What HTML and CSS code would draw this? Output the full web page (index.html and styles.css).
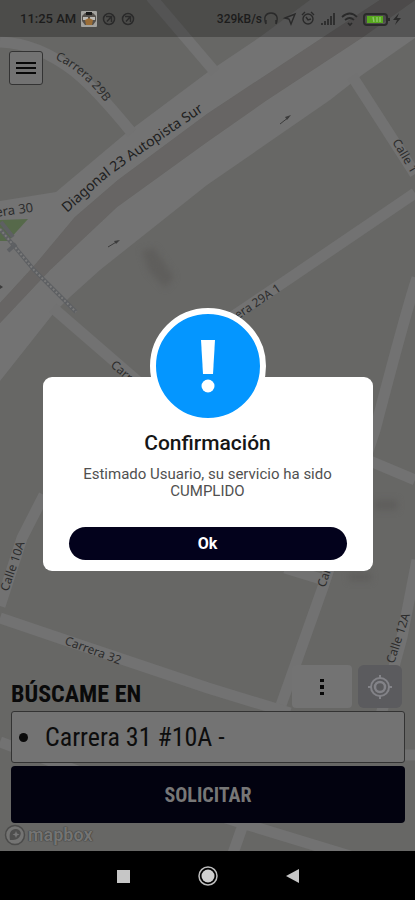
FILE: index.html
```html
<!DOCTYPE html>
<html lang="es">
<head>
<meta charset="utf-8">
<meta name="viewport" content="width=device-width, initial-scale=1">
<title>Confirmación</title>
<link rel="stylesheet" href="styles.css">
</head>
<body>
<div class="screen">
  <svg class="map" viewBox="0 0 415 900" preserveAspectRatio="xMidYMid slice" aria-hidden="true">
    <defs>
      <path id="p29b" d="M55 59Q86 73 112 112"/>
      <path id="pdiag" d="M67 213L104 180Q124 164 210 107"/>
      <path id="p32" d="M64 644L134 670"/>
      <path id="p30" d="M-4 217L46 210"/>
    </defs>
    <g class="road">
      <path class="fill" d="M0 201L56 192L125 134L208 72L260 37L310 0H380L322 38L207 114L118 180L75 217L34 266L0 303Z"/>
      <path class="fill" d="M0 323L50 270L117 207L207 142L267 100L363 37L415 0V38L362 75L330 100L207 185L100 270L70 297L53 314L0 381Z"/>
      <path d="M0 42Q38 43 75 72Q97 90 132 133"/>
      <path d="M151 -3L215 72"/>
      <path d="M352 76L372 107L415 174"/>
      <path d="M415 193L290 278L190 345"/>
      <path d="M417 278Q406 311 375 430L323 587L280 708"/>
      <path d="M370 461L415 480M285 568L321 579"/>
      <path d="M0 618L65 640L208 688L290 713"/>
      <path d="M0 606Q10 575 22 538L44 495"/>
      <path d="M417 560L402 637L385 700L370 755H415"/>
      <path d="M53 308L150 392"/>
      <path d="M0 742L80 772L245 824L350 856M232 856L244 822"/>
    </g>
    <path class="median" d="M322 38L207 114L118 180L75 217L34 266L0 303V323L50 270L117 207L207 142L267 100L363 37L415 0H380Z"/>
    <path class="park" d="M0 220L28 219L8 241H0Z"/>
    <path class="rail" d="M0 229L34 270L76 312"/>
    <path class="rail-dots" d="M0 229L34 270L76 312"/>
    <path class="rail" d="M8 251L16 244M1 222L13 237"/>
    <g class="smudge">
      <path d="M142 251l12 -3 20 29 -9 11 -16 -17z"/>
      <path d="M375 500h22v10h-22zM349 573h22v8h-22z"/>
    </g>
    <g class="arrow">
      <path d="M108 247L118 241M280 124L289 117"/>
      <path class="head" d="M120 240l-6 1 2 3zM291 115l-6 2 2 3zM0 285l3 2-3 2z"/>
    </g>
    <g class="labels">
      <text><textPath href="#p29b">Carrera 29B</textPath></text>
      <text class="major"><textPath href="#pdiag">Diagonal 23 Autopista Sur</textPath></text>
      <text class="mid"><textPath href="#p30">era 30</textPath></text>
      <text><textPath href="#p32">Carrera 32</textPath></text>
      <text transform="translate(392 142) rotate(59)">Calle 1</text>
      <text transform="translate(218 333) rotate(-34)">Carrera 29A 1</text>
      <text transform="translate(110 366) rotate(41)">Carrera</text>
      <text transform="translate(8 592) rotate(-71)">Calle 10A</text>
      <text transform="translate(394 664) rotate(-72)">Calle 12A</text>
      <text transform="translate(325 588) rotate(-71)">Calle 11</text>
    </g>
  </svg>

  <header class="status">
    <div class="status-group">
      <span class="clock">11:25 AM</span>
      <svg class="icon16" viewBox="0 0 16 16"><rect width="16" height="16" rx="1" fill="#a3a29e"/><path d="M1 5l3-3h8l3 3v5l-3 4H4l-3-4z" fill="#55514c"/><path d="M5 1h6v3H5z" fill="#171717"/><path d="M2 6h5v3H2zM9 6h5v3H9z" fill="#bcbab5"/><path d="M4 9l4-2 4 2-1 5H5z" fill="#9a6d37"/></svg>
      <svg class="icon14" viewBox="0 0 14 14"><circle cx="7" cy="7" r="5.500" fill="none" stroke="#2a2a2a" stroke-width="1.500"/><path d="M4 4.500h5.500V10M9.500 4.500L5 9.500" fill="none" stroke="#2a2a2a" stroke-width="1.500"/></svg>
      <svg class="icon14" viewBox="0 0 14 14"><circle cx="7" cy="7" r="5.500" fill="none" stroke="#2a2a2a" stroke-width="1.500"/><path d="M4 4.500h5.500V10M9.500 4.500L5 9.500" fill="none" stroke="#2a2a2a" stroke-width="1.500"/></svg>
    </div>
    <div class="status-group right">
      <span class="speed">329kB/s</span>
      <svg class="signals" viewBox="0 0 138 16" fill="none" stroke="#2a2a2a" stroke-width="1.4">
        <path d="M3 13C0 6 3 2 8 2s8 4 5 11M3 9v4M13 9v4"/>
        <path d="M22 7l10-4-4 10-2-5z"/>
        <circle cx="45" cy="8" r="5"/><path d="M43 6l2 3 3-1M39 4l3-3M48 1l3 3"/>
        <path d="M59 14v-2M62 14v-4M65 14V8M68 14V5M71 14V2" stroke-width="1.700"/>
        <path d="M79 6q8-7 15 0M82 9q5-4 9 0M85 12l2 2 2-2" stroke-width="1.700"/>
        <rect x="101" y="3" width="23" height="11" rx="3" stroke-width="2"/><path d="M126 7v3" stroke-width="2"/>
        <path d="M104 5h16v7h-16z" fill="#58a91f" stroke="none"/><path d="M110 6l1 5M114 6v5M117 6v5" stroke="#8cc66a"/>
        <path d="M136 2l-6 7h4l-2 5 6-7h-4z" fill="#2a2a2a" stroke="none"/>
      </svg>
    </div>
  </header>

  <main class="content">
    <button class="menu" type="button" aria-label="Menú">
      <svg viewBox="0 0 20 14"><path d="M0 2h20M0 7h20M0 12h20" stroke="#080808" stroke-width="2"/></svg>
    </button>

    <form class="request">
      <div class="request-head">
        <label for="address">BÚSCAME EN</label>
        <div class="tools">
          <button class="more" type="button" aria-label="Más opciones">
            <svg viewBox="0 0 4 18"><path d="M0 1h4v3H0zM0 7h4v4H0zM0 14h4v3H0z" fill="#080808"/></svg>
          </button>
          <button class="locate" type="button" aria-label="Mi ubicación">
            <svg viewBox="0 0 24 24" fill="none" stroke="#838388" stroke-width="2"><circle cx="12" cy="12" r="9"/><circle cx="12" cy="12" r="5" stroke-width="2.500"/><path d="M12 0v4M12 20v4M0 12h4M20 12h4"/></svg>
          </button>
        </div>
      </div>
      <div class="field">
        <span class="bullet"></span>
        <input id="address" type="text" value="Carrera 31 #10A -">
      </div>
      <button class="submit" type="button">SOLICITAR</button>
    </form>

    <div class="credit">
      <svg viewBox="0 0 22 22"><circle cx="11" cy="11" r="9.500" fill="#747473" stroke="#4b4b4a" stroke-width="1.500"/><path d="M6 16c-1-6 0-11 6-11 4 0 6 4 4 7-2 4-6 4-10 4z" fill="#4e4e4d"/><path d="M12 7l1 2.500 2.500 1-2.500 1-1 2.500-1-2.500-2.500-1 2.500-1z" fill="#777"/></svg>
      <span>mapbox</span>
    </div>

    <div class="overlay">
      <section class="dialog" role="dialog" aria-labelledby="dialog-title">
        <div class="badge">
          <svg viewBox="0 0 16 54"><path d="M1 1h14l-2 34H3z" fill="#fff"/><circle cx="8" cy="47" r="6.500" fill="#fff"/></svg>
        </div>
        <h1 id="dialog-title">Confirmación</h1>
        <p>Estimado Usuario, su servicio ha sido CUMPLIDO</p>
        <button class="ok" type="button">Ok</button>
      </section>
    </div>
  </main>

  <nav class="system">
    <button type="button" aria-label="Recientes"><svg viewBox="0 0 22 22"><path d="M5 5h13v13H5z" fill="#c6c6c6"/></svg></button>
    <button type="button" aria-label="Inicio"><svg viewBox="0 0 22 22"><circle cx="11" cy="11" r="9" fill="none" stroke="#bdbdbd" stroke-width="1.500"/><circle cx="11" cy="11" r="6.500" fill="#cfcfcf"/></svg></button>
    <button type="button" aria-label="Atrás"><svg viewBox="0 0 22 22"><path d="M17 4v14L4 11z" fill="#c6c6c6"/></svg></button>
  </nav>
</div>
</body>
</html>
```
FILE: styles.css
```css
* { box-sizing: border-box; }

body {
  margin: 0;
  font-family: Roboto, "Liberation Sans", sans-serif;
  color: #0a0a0a;
}

button {
  padding: 0;
  border: 0;
  background: none;
  font-family: inherit;
  color: inherit;
}

svg { display: block; }

.screen {
  position: relative;
  display: flex;
  flex-direction: column;
  min-height: 100vh;
  overflow: hidden;
  background: #676765;
}

/* Map */
.map {
  position: absolute;
  inset: 0;
  width: 100%;
  height: 100%;
}

.road { fill: none; stroke: #727272; stroke-width: 11px; }
.road .fill { fill: #737373; stroke: none; }
.median { fill: #676564; }
.park { fill: #56694a; }
.rail { fill: none; stroke: #5e6063; stroke-width: 4px; }
.rail-dots { fill: none; stroke: #7a7a7a; stroke-width: 2px; stroke-dasharray: 2 2; }
.smudge { fill: #5f5e5c; filter: blur(3px); }
.arrow { fill: none; stroke: #3c3c3c; stroke-width: 1px; }
.arrow .head { fill: #3c3c3c; stroke: none; }
.labels {
  font-family: "Noto Sans", sans-serif;
  font-size: 12px;
  fill: #2c2c2c;
}
.labels .major { font-size: 14px; fill: #202020; }
.labels .mid { font-size: 13px; }

/* Status bar */
.status {
  position: relative;
  display: flex;
  align-items: center;
  justify-content: space-between;
  height: 37px;
  padding: 0 14px 0 20px;
  background: rgb(0 0 0 / 26%);
  color: #1c1c1c;
}

.status-group { display: flex; align-items: center; gap: 5px; }
.status-group.right { gap: 1px; }
.clock { font-size: 13px; font-weight: 500; }
.speed { font-size: 12px; font-weight: 500; }
.icon16 { width: 16px; height: 16px; }
.icon14 { width: 14px; height: 14px; }
.signals { width: 138px; height: 16px; }

/* Content over the map */
.content {
  position: relative;
  display: flex;
  flex: 1;
  flex-direction: column;
}

.menu {
  display: grid;
  place-items: center;
  width: 34px;
  height: 34px;
  margin: 14px 9px;
  border: 1px solid #333;
  border-radius: 3px;
  background: #727272;
}
.menu svg { width: 20px; height: 14px; }

.request {
  display: flex;
  flex-direction: column;
  gap: 3px;
  margin: auto 10px 0 11px;
  font-family: "Roboto Condensed", "Liberation Sans Narrow", "Liberation Sans", sans-serif;
}

.request-head {
  display: flex;
  align-items: flex-end;
  justify-content: space-between;
}
.request-head label {
  font-size: 24px;
  line-height: 28px;
  font-weight: 700;
}

.tools { display: flex; gap: 6px; padding-right: 3px; }
.tools button {
  display: grid;
  place-items: center;
  height: 43px;
}
.more { width: 60px; border-radius: 4px; background: #737373; }
.more svg { width: 4px; height: 18px; }
.locate { width: 44px; border-radius: 6px; background: #5b5b5e; }
.locate svg { width: 24px; height: 24px; }

.field {
  display: flex;
  align-items: center;
  gap: 17px;
  height: 52px;
  padding: 0 7px;
  border: 1px solid #333;
  border-radius: 3px;
  background: #737373;
}
.bullet { width: 9px; height: 9px; border-radius: 50%; background: #0a0a0a; }
.field input {
  flex: 1;
  min-width: 0;
  padding: 0;
  border: 0;
  outline: 0;
  background: none;
  font: inherit;
  font-size: 26px;
  color: #0d0d0d;
}

.submit {
  height: 57px;
  border-radius: 4px;
  background: #02020f;
  color: #777;
  font-size: 20px;
  font-weight: 700;
}

.credit {
  display: flex;
  align-items: center;
  gap: 2px;
  height: 28px;
  padding: 0 4px 4px;
  color: #747473;
  font-size: 18px;
  font-weight: 700;
  line-height: 22px;
  text-shadow: 0 0 1px #333, 0 0 1px #333;
}
.credit svg { width: 22px; height: 22px; }

/* Dialog */
.overlay {
  position: absolute;
  inset: 0;
  display: flex;
  align-items: center;
  justify-content: center;
  padding: 69px 42px 10px;
}
.dialog {
  display: flex;
  flex-direction: column;
  align-items: center;
  width: 100%;
  max-width: 330px;
  padding: 0 26px 11px;
  border-radius: 9px;
  background: #fff;
  text-align: center;
}
.badge {
  display: grid;
  place-items: center;
  width: 116px;
  height: 116px;
  margin-top: -69px;
  border: 6px solid #fff;
  border-radius: 50%;
  background: #0496ff;
}
.badge svg { width: 16px; height: 54px; }
.dialog h1 {
  margin: 6px 0 10px;
  font-size: 21px;
  line-height: 26px;
  font-weight: 500;
  color: #161616;
}
.dialog p {
  max-width: 260px;
  margin: 0 0 27px;
  font-size: 15px;
  line-height: 17px;
  color: #505050;
}
.ok {
  width: 100%;
  height: 33px;
  border-radius: 17px;
  background: #03021c;
  color: #fff;
  font-size: 16px;
  font-weight: 700;
}

/* System navigation */
.system {
  position: relative;
  display: flex;
  align-items: center;
  justify-content: center;
  gap: 63px;
  height: 49px;
  background: #000;
}
.system svg { width: 22px; height: 22px; }
```
